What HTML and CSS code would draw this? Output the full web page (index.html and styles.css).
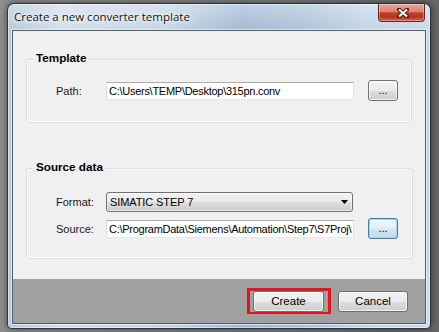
FILE: index.html
```html
<!DOCTYPE html>
<html>
<head>
<meta charset="utf-8">
<link rel="stylesheet" href="styles.css">
</head>
<body>
<div class="window">
  <div class="titlebar">
    <span class="title">Create a new converter template</span>
    <div class="close">
      <svg width="12" height="10" viewBox="0 0 12 10">
        <path d="M2 1.5 L10 8.5 M10 1.5 L2 8.5" stroke="#4a1a14" stroke-width="4" stroke-linecap="square" fill="none"/>
        <path d="M2 1.5 L10 8.5 M10 1.5 L2 8.5" stroke="#ffffff" stroke-width="2.2" stroke-linecap="butt" fill="none"/>
      </svg>
    </div>
  </div>
  <div class="client">
    <div class="main">
      <div class="group group-template">
        <span class="legend">Template</span>
        <div class="row">
          <span class="label">Path:</span>
          <input class="text" readonly value="C:\Users\TEMP\Desktop\315pn.conv">
          <span class="browse">...</span>
        </div>
      </div>
      <div class="group group-source">
        <span class="legend">Source data</span>
        <div class="row row-combo">
          <span class="label">Format:</span>
          <div class="combo">
            <span class="combo-text">SIMATIC STEP 7</span>
            <svg class="arrow" width="7" height="4" viewBox="0 0 7 4"><path d="M0 0 H7 L3.5 4 Z" fill="#000"/></svg>
          </div>
        </div>
        <div class="row">
          <span class="label">Source:</span>
          <input class="text" readonly value="C:\ProgramData\Siemens\Automation\Step7\S7Proj\315pn">
          <span class="browse browse-focus">...</span>
        </div>
      </div>
    </div>
    <div class="footer">
      <span class="mark"><span class="btn">Create</span></span>
      <span class="btn btn-cancel">Cancel</span>
    </div>
  </div>
</div>
</body>
</html>
```
FILE: styles.css
```css
html, body {
  margin: 0;
  padding: 0;
}
body {
  width: 439px;
  height: 332px;
  overflow: hidden;
  background: linear-gradient(to right, #8e8e8e 0%, #7d7d7d 60%, #666 100%);
  font-family: "Liberation Sans", Arial, sans-serif;
  font-size: 11px;
  color: #000;
}
.window {
  box-sizing: border-box;
  margin: 3px 0 0 7px;
  width: 424px;
  height: 326px;
  border: 1px solid rgba(20, 24, 30, 0.85);
  border-radius: 7px 7px 5px 5px;
  padding: 0 4px 4px 4px;
  display: flex;
  flex-direction: column;
  background:
    linear-gradient(to bottom, rgba(255,255,255,0.35) 0, rgba(255,255,255,0) 30px),
    linear-gradient(to right, #b4c6d9 0%, #cfdcea 12%, #c3d3e4 38%, #9eb8d3 55%, #a9c0d8 70%, #c2d4e6 85%, #c8d8ea 100%);
  box-shadow: 0 0 6px rgba(0,0,0,0.55), inset 0 0 0 1px rgba(255,255,255,0.45);
}
.titlebar {
  height: 26px;
  flex: none;
  display: flex;
  justify-content: space-between;
  align-items: flex-start;
  padding-left: 2px;
}
.title {
  font-family: "Open Sans", "Noto Sans", sans-serif;
  font-size: 11.5px;
  line-height: 16px;
  margin-top: 5px;
  color: #111;
  text-shadow: 0 0 8px #fff, 0 0 4px #fff, 0 0 2px rgba(255,255,255,0.9);
}
.close {
  width: 47px;
  height: 18px;
  margin-right: 1px;
  box-sizing: border-box;
  border: 1px solid #5c2a22;
  border-top: none;
  border-radius: 0 0 4px 4px;
  background:
    linear-gradient(to bottom, #e8a597 0%, #d98273 45%, #c0402a 52%, #b8331d 75%, #d2654a 100%);
  box-shadow: inset 0 0 0 1px rgba(255,255,255,0.35);
  display: flex;
  align-items: center;
  justify-content: center;
}
.close svg {
  display: block;
  margin-left: 2px;
}
.client {
  flex: 1;
  display: flex;
  flex-direction: column;
  border: 1px solid #4f5f70;
  box-shadow: 0 0 0 1px rgba(255,255,255,0.55);
}
.main {
  flex: 1;
  background: #f0f0f0;
  padding: 28px 12px 0 13px;
  display: flex;
  flex-direction: column;
  gap: 45px;
}
.group {
  position: relative;
  border: 1px solid #d5dfe5;
  border-radius: 3px;
  box-shadow: inset 0 0 0 1px #fcfcfc;
  box-sizing: border-box;
  padding-left: 29px;
  display: flex;
  flex-direction: column;
  gap: 6px;
}
.group-template {
  height: 64px;
  width: 386px;
  padding-top: 20px;
}
.group-source {
  height: 91px;
  width: 387px;
  padding-top: 23px;
}
.legend {
  position: absolute;
  top: -9px;
  left: 7px;
  padding: 0 2px;
  background: #f0f0f0;
  font-weight: bold;
  font-size: 11.7px;
  line-height: 14px;
  color: #000;
}
.row {
  display: flex;
  align-items: center;
  height: 21px;
}
.row-combo {
  height: 20px;
}
.label {
  width: 50px;
  flex: none;
  color: #1a1a1a;
}
.text {
  box-sizing: border-box;
  width: 248px;
  height: 18px;
  margin: 0;
  padding: 0 1px 0 2px;
  border: 1px solid #e3e9ef;
  border-top-color: #abadb3;
  border-left-color: #dbdfe6;
  border-right-color: #dbdfe6;
  background: #fff;
  font-family: "Liberation Sans", Arial, sans-serif;
  font-size: 11px;
  letter-spacing: -0.27px;
  color: #000;
  outline: none;
}
.browse {
  box-sizing: border-box;
  width: 30px;
  height: 21px;
  margin-left: 14px;
  border: 1px solid #707070;
  border-radius: 3px;
  background: linear-gradient(to bottom, #f2f2f2 0%, #ebebeb 50%, #dddddd 51%, #cfcfcf 100%);
  box-shadow: inset 0 0 0 1px rgba(255,255,255,0.7);
  text-align: center;
  line-height: 19px;
  font-size: 11px;
  color: #000;
}
.browse-focus {
  border-color: #3c7fb1;
  background: linear-gradient(to bottom, #eef6fb 0%, #e2eef6 50%, #d3e4ef 51%, #c6dbea 100%);
  box-shadow: inset 0 0 0 1px #a6d6f2;
}
.combo {
  box-sizing: border-box;
  width: 247px;
  height: 20px;
  border: 1px solid #707070;
  border-radius: 3px;
  background: linear-gradient(to bottom, #f2f2f2 0%, #ebebeb 50%, #dddddd 51%, #cfcfcf 100%);
  box-shadow: inset 0 0 0 1px rgba(255,255,255,0.6);
  display: flex;
  align-items: center;
  justify-content: space-between;
  padding: 0 4px 0 3px;
}
.combo-text {
  font-size: 11px;
  letter-spacing: -0.1px;
  color: #000;
}
.arrow {
  display: block;
}
.footer {
  height: 44px;
  flex: none;
  background: #a0a0a0;
  display: flex;
  justify-content: flex-end;
  align-items: flex-start;
  padding: 9px 17px 0 0;
  box-sizing: border-box;
}
.mark {
  display: flex;
  border: 3px solid #e8131b;
  border-bottom-width: 2px;
  padding: 0 4px 0 3px;
}
.btn {
  box-sizing: border-box;
  width: 71px;
  height: 21px;
  border: 1px solid #707070;
  border-radius: 3px;
  background: linear-gradient(to bottom, #f2f2f2 0%, #ebebeb 50%, #dddddd 51%, #cfcfcf 100%);
  box-shadow: inset 0 0 0 1px rgba(255,255,255,0.7);
  text-align: center;
  line-height: 18px;
  font-size: 11.5px;
  color: #000;
}
.btn-cancel {
  width: 70px;
  margin: 3px 0 0 7px;
}
```
